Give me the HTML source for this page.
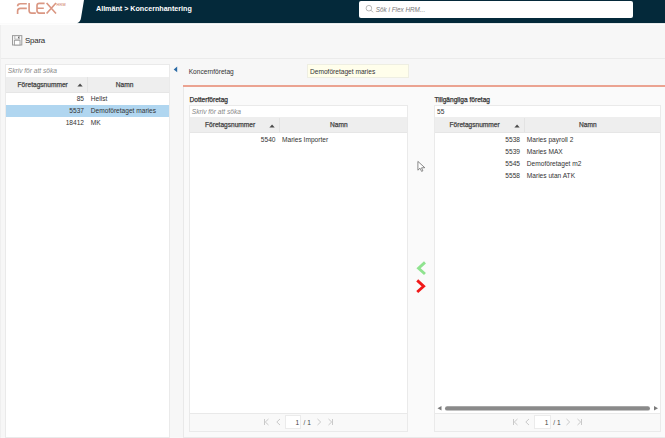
<!DOCTYPE html>
<html><head><meta charset="utf-8">
<style>
*{box-sizing:border-box;margin:0;padding:0}
html,body{width:665px;height:438px;overflow:hidden;background:#f7f7f7;font-family:"Liberation Sans",sans-serif;color:#333;font-size:6.6px}
.a{position:absolute}
.t{position:absolute;white-space:nowrap;line-height:10px;height:10px}
#hdr{left:0;top:0;width:665px;height:23px;background:#fff}
.box{background:#fff;border:1px solid #eaeaea}
.ghead{background:#eeeeee;border-bottom:1px solid #e6e6e6}
.sel{background:#b0d6f0}
.num{text-align:right}
.ph{font-style:italic;color:#888}
.b{font-weight:normal;-webkit-text-stroke:0.25px currentColor}
</style></head><body>
<!-- header -->
<div id="hdr" class="a"></div>
<svg class="a" style="left:0;top:0" width="665" height="25">
  <path d="M84,0 L665,0 L665,23.3 L76.8,23.3 Q80.6,22 81,18 Z" fill="#04293a"/>
  <rect x="0" y="23.3" width="665" height="1.8" fill="#fdfdfd"/>
</svg>
<!-- logo -->
<svg class="a" style="left:0;top:0" width="80" height="20">
  <g fill="none" stroke="#da9783" stroke-width="1.65" stroke-linecap="butt">
    <path d="M17.6,6.3 Q17.6,3.7 20.4,3.7 L26.8,3.7"/>
    <path d="M26.8,8.3 L20.4,8.3 Q17.6,8.3 17.6,11.1 L17.6,13.9"/>
    <path d="M29.1,3 L29.1,10.4 Q29.1,13.1 31.8,13.1 L35.8,13.1"/>
    <path d="M44.6,3.3 L39.4,3.3 Q37,3.3 37,5.6 L37,10.8 Q37,13.1 39.4,13.1 L45,13.1 M37,8.2 L43.8,8.2"/>
    <path d="M46.6,3 L56,13.5 M56,3 L46.6,13.5"/>
  </g>
  <text x="56.6" y="6" font-size="3.7" fill="#dc9f8d" stroke="#dc9f8d" stroke-width="0.15" font-family="Liberation Sans" letter-spacing="0.3">HRM</text>
</svg>
<div class="t b" style="left:96px;top:4.3px;color:#fff;font-size:7.15px;font-weight:bold;-webkit-text-stroke:0">Allmänt &gt; Koncernhantering</div>
<!-- global search -->
<div class="a" style="left:359px;top:1px;width:274px;height:16.6px;background:#fff;border-radius:2px"></div>
<svg class="a" style="left:365px;top:4px" width="10" height="10">
  <circle cx="3.9" cy="4.2" r="2.8" fill="none" stroke="#999" stroke-width="0.7"/>
  <path d="M5.9,6.2 L8,8.3" stroke="#999" stroke-width="0.8"/>
</svg>
<div class="t ph" style="left:375.8px;top:5.1px;font-size:6.35px;color:#777">Sök i Flex HRM...</div>

<!-- toolbar -->
<svg class="a" style="left:11px;top:34px" width="12" height="12">
  <rect x="1.5" y="1.6" width="9.3" height="9.4" fill="none" stroke="#9c9c9c" stroke-width="1"/>
  <path d="M3.8,1.6 L3.8,5.2 L8.5,5.2 L8.5,1.6" fill="none" stroke="#a8a8a8" stroke-width="0.8"/>
  <rect x="7" y="2.6" width="1" height="1.8" fill="#6a6a6a"/>
  <rect x="3.4" y="6.3" width="5.6" height="4.7" fill="#fff" stroke="#9c9c9c" stroke-width="0.9"/>
</svg>
<div class="t" style="left:25px;top:35.8px;font-size:7.9px;letter-spacing:-0.22px;color:#2a2a2a">Spara</div>
<div class="a" style="left:0;top:58px;width:665px;height:1px;background:#ebebeb"></div>
<div class="a" style="left:0;top:25px;width:1px;height:413px;background:#efefef"></div>

<!-- left panel -->
<div class="a box" style="left:5px;top:64px;width:165px;height:374px"></div>
<div class="t ph" style="left:7.8px;top:66px">Skriv för att söka</div>
<div class="a ghead" style="left:6px;top:77px;width:163px;height:15.8px"></div>
<div class="a" style="left:87.3px;top:77px;width:1px;height:15px;background:#e3e3e3"></div>
<div class="t b" style="left:17.6px;top:80px;color:#444">Företagsnummer</div>
<svg class="a" style="left:77px;top:83px" width="7" height="4"><path d="M0.4,3.4 L3.05,0.5 L5.7,3.4 Z" fill="#4a4a4a"/></svg>
<div class="t b" style="left:115.8px;top:80px;color:#444">Namn</div>
<div class="a sel" style="left:6px;top:105px;width:163px;height:12px"></div>
<div class="t num" style="left:40px;width:44px;top:94px">85</div><div class="t" style="left:90.8px;top:94px">Hellst</div>
<div class="t num" style="left:40px;width:44px;top:106px">5537</div><div class="t" style="left:90.8px;top:106px">Demoföretaget maries</div>
<div class="t num" style="left:40px;width:44px;top:118px">18412</div><div class="t" style="left:90.8px;top:118px">MK</div>

<!-- collapse triangle -->
<svg class="a" style="left:172px;top:66px" width="7" height="7"><path d="M5.2,0.6 L5.2,6.3 L1.7,3.45 Z" fill="#2a6aa5"/></svg>

<!-- koncernforetag -->
<div class="t" style="left:188.7px;top:66.8px">Koncernföretag</div>
<div class="a" style="left:307px;top:64.3px;width:101.5px;height:14px;background:#fffeeb;border:1px solid #eeeee2"></div>
<div class="t" style="left:310px;top:66.8px">Demoföretaget maries</div>
<div class="a" style="left:183px;top:85px;width:482px;height:2.5px;background:#eba391"></div>

<!-- main box -->
<div class="a" style="left:183px;top:87px;width:482px;height:351px;background:#fafafa;border:1px solid #e9e9e9;border-top:none;border-right:none"></div>

<!-- Dotterforetag -->
<div class="t b" style="left:189.5px;top:95px">Dotterföretag</div>
<div class="a box" style="left:189px;top:105px;width:218.5px;height:326.5px"></div>
<div class="t ph" style="left:191.8px;top:107px">Skriv för att söka</div>
<div class="a ghead" style="left:190px;top:117.3px;width:216.5px;height:15.5px"></div>
<div class="a" style="left:279px;top:117.5px;width:1px;height:14.5px;background:#e3e3e3"></div>
<div class="t b" style="left:205px;top:120px;color:#444">Företagsnummer</div>
<svg class="a" style="left:268.8px;top:123.5px" width="7" height="4"><path d="M0.4,3.4 L3.05,0.5 L5.7,3.4 Z" fill="#4a4a4a"/></svg>
<div class="t b" style="left:330px;top:120px;color:#444">Namn</div>
<div class="t num" style="left:230px;width:45.5px;top:134.8px">5540</div><div class="t" style="left:282px;top:134.8px">Maries Importer</div>
<div class="a" style="left:190px;top:413px;width:216.5px;height:18px;background:#f9f9f9;border-top:1px solid #e9e9e9"></div>

<!-- middle column -->

<svg class="a" style="left:412px;top:258px" width="18" height="38">
  <path d="M11.9,5.4 L6.6,10.2 L11.9,15" fill="none" stroke="#8fe38f" stroke-width="2.9" stroke-linecap="square"/>
  <path d="M6.3,23.4 L11.6,28.2 L6.3,33" fill="none" stroke="#f01818" stroke-width="2.9" stroke-linecap="square"/>
</svg>
<!-- mouse cursor -->
<svg class="a" style="left:416px;top:159px" width="10" height="14">
  <path d="M1.9,2.4 L1.9,11.2 L4,9.2 L5.6,12.4 L6.9,11.8 L5.5,8.8 L8.8,8.7 Z" fill="#fff" stroke="#666" stroke-width="0.75"/>
</svg>

<!-- Tillgangliga -->
<div class="t b" style="left:434.5px;top:95px">Tillgängliga företag</div>
<div class="a box" style="left:434px;top:105px;width:226.5px;height:326.5px"></div>
<div class="t" style="left:437px;top:107px">55</div>
<div class="a ghead" style="left:435px;top:117.3px;width:224.5px;height:15.5px"></div>
<div class="a" style="left:524.3px;top:117.5px;width:1px;height:14.5px;background:#e3e3e3"></div>
<div class="t b" style="left:449.5px;top:120px;color:#444">Företagsnummer</div>
<svg class="a" style="left:514px;top:124px" width="7" height="4"><path d="M0.4,3.4 L3.05,0.5 L5.7,3.4 Z" fill="#4a4a4a"/></svg>
<div class="t b" style="left:579px;top:120px;color:#444">Namn</div>
<div class="t num" style="left:475px;width:45px;top:134.8px">5538</div><div class="t" style="left:526.8px;top:134.8px">Maries payroll 2</div>
<div class="t num" style="left:475px;width:45px;top:146.8px">5539</div><div class="t" style="left:526.8px;top:146.8px">Maries MAX</div>
<div class="t num" style="left:475px;width:45px;top:158.8px">5545</div><div class="t" style="left:526.8px;top:158.8px">Demoföretaget m2</div>
<div class="t num" style="left:475px;width:45px;top:170.8px">5558</div><div class="t" style="left:526.8px;top:170.8px">Maries utan ATK</div>
<!-- scrollbar -->
<svg class="a" style="left:435px;top:404px" width="225" height="9">
  <path d="M2.5,4.3 L6.5,2 L6.5,6.6 Z" fill="#7a7a7a"/>
  <rect x="10" y="2.2" width="205" height="4.4" rx="2.2" fill="#8a8a8a"/>
  <path d="M223,4.3 L219,2 L219,6.6 Z" fill="#7a7a7a"/>
</svg>
<div class="a" style="left:435px;top:413px;width:224.5px;height:18px;background:#f9f9f9;border-top:1px solid #e9e9e9"></div>

<!-- pagers -->
<svg class="a" style="left:262px;top:417px" width="75" height="12">
  <g fill="none" stroke="#c4c4c4" stroke-width="0.9">
    <path d="M2.5,2 L2.5,8 M6.5,2 L3.3,5 L6.5,8"/>
    <path d="M18,2 L14.8,5 L18,8"/>
    <path d="M55.5,2 L58.7,5 L55.5,8"/>
    <path d="M66.5,2 L69.7,5 L66.5,8 M70.5,2 L70.5,8"/>
  </g>
</svg>
<div class="a" style="left:285.3px;top:415.3px;width:16px;height:13.3px;background:#fff;border:1px solid #ebebeb"></div>
<div class="t" style="left:295.6px;top:418.3px;color:#444">1</div>
<div class="t" style="left:303.5px;top:418.3px;color:#444">/ 1</div>

<svg class="a" style="left:511px;top:417px" width="75" height="12">
  <g fill="none" stroke="#c4c4c4" stroke-width="0.9">
    <path d="M2.5,2 L2.5,8 M6.5,2 L3.3,5 L6.5,8"/>
    <path d="M18,2 L14.8,5 L18,8"/>
    <path d="M55.5,2 L58.7,5 L55.5,8"/>
    <path d="M66.5,2 L69.7,5 L66.5,8 M70.5,2 L70.5,8"/>
  </g>
</svg>
<div class="a" style="left:534.4px;top:415.3px;width:16.4px;height:13.3px;background:#fff;border:1px solid #ebebeb"></div>
<div class="t" style="left:544.8px;top:418.3px;color:#444">1</div>
<div class="t" style="left:553.3px;top:418.3px;color:#444">/ 1</div>
</body></html>
